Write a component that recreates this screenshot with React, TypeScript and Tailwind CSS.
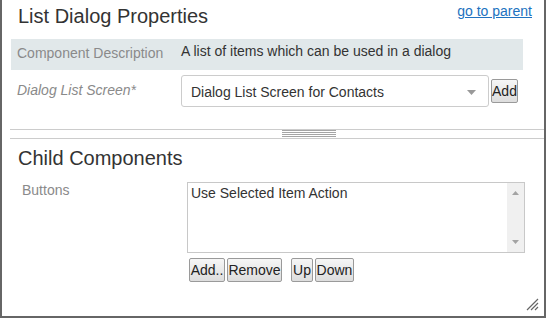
import React from "react";

function Btn({ children, w, className = "" }: { children: React.ReactNode; w: string; className?: string }) {
  return (
    <div
      className={`h-[24px] ${w} ${className} flex items-center justify-center rounded-[2px] border border-[#9a9a9a] bg-gradient-to-b from-[#f6f6f6] to-[#dddddd] text-[14px] text-[#222] leading-none`}
    >
      {children}
    </div>
  );
}

export default function App() {
  return (
    <div className="w-[547px] h-[319px] bg-white font-['Liberation_Sans',Arial,sans-serif] text-[14px] text-[#333]">
      <div className="relative w-[546px] h-[318px] border-l-2 border-r-2 border-b-2 border-[#666] flex flex-col">
        {/* header */}
        <div className="h-[39px] flex items-start justify-between">
          <div className="ml-[16px] mt-[5px] text-[20px] leading-[23px] text-[#333]">List Dialog Properties</div>
          <a className="mr-[12px] mt-[3px] text-[14px] leading-[16px] text-[#2172c0] underline">go to parent</a>
        </div>
        {/* description row */}
        <div className="ml-[9px] w-[512px] h-[31px] bg-[#e1e8ea] flex items-start">
          <div className="w-[170px] pl-[6px] pt-[6px] leading-[16px] text-[#8a8a8a]">Component Description</div>
          <div className="pt-[4px] leading-[16px] text-[#333]">A list of items which can be used in a dialog</div>
        </div>
        {/* select row */}
        <div className="mt-[5px] flex items-start">
          <div className="ml-[15px] w-[164px] pt-[7px] leading-[16px] italic text-[#8a8a8a]">Dialog List Screen*</div>
          <div className="w-[308px] h-[32px] border border-[#cccccc] rounded-[3px] flex items-start justify-between bg-white">
            <span className="ml-[9px] pt-[8px] leading-[16px] text-[#333]">Dialog List Screen for Contacts</span>
            <svg className="mt-[14px] mr-[12px]" width="9" height="5" viewBox="0 0 9 5">
              <path d="M0 0 L9 0 L4.5 5 Z" fill="#999" />
            </svg>
          </div>
          <Btn w="w-[27px]" className="ml-[2px] mt-[4px]">Add</Btn>
        </div>
        {/* separator */}
        <div className="mt-[22px] ml-[8px] h-[10px] border-t border-b border-[#cccccc] flex items-start">
          <div className="ml-[272px] w-[54px] flex flex-col gap-[1px]">
            <div className="h-px bg-[#a5a5a5]" />
            <div className="h-px bg-[#a5a5a5]" />
            <div className="h-px bg-[#a5a5a5]" />
            <div className="h-px bg-[#a5a5a5]" />
          </div>
        </div>
        {/* child components */}
        <div className="ml-[16px] mt-[8px] text-[20px] leading-[23px] text-[#333]">Child Components</div>
        <div className="mt-[12px] flex items-start">
          <div className="ml-[20px] w-[165px] leading-[16px] pt-[0px] text-[#8a8a8a]">Buttons</div>
          <div className="flex flex-col">
            <div className="w-[338px] h-[71px] border border-[#c8c8c8] flex">
              <div className="flex-1 pl-[3px] pt-[2px] leading-[16px] text-[#333]">Use Selected Item Action</div>
              <div className="w-[17px] bg-[#f0f0f0] flex flex-col items-center justify-between py-[8px]">
                <svg width="7" height="4" viewBox="0 0 7 4">
                  <path d="M0 4 L7 4 L3.5 0 Z" fill="#a3a3a3" />
                </svg>
                <svg width="7" height="4" viewBox="0 0 7 4">
                  <path d="M0 0 L7 0 L3.5 4 Z" fill="#a3a3a3" />
                </svg>
              </div>
            </div>
            <div className="mt-[5px] ml-[2px] flex items-start">
              <Btn w="w-[36px]">Add..</Btn>
              <Btn w="w-[55px]" className="ml-[2px]">Remove</Btn>
              <Btn w="w-[22px]" className="ml-[9px]">Up</Btn>
              <Btn w="w-[39px]" className="ml-[2px]">Down</Btn>
            </div>
          </div>
        </div>
        {/* resize grip */}
        <svg className="absolute right-[5px] bottom-[5px]" width="13" height="13" viewBox="0 0 13 13">
          <path d="M1 12 L12 1 M5 12 L12 5 M9 12 L12 9" stroke="#666" strokeWidth="1.2" />
        </svg>
      </div>
    </div>
  );
}
